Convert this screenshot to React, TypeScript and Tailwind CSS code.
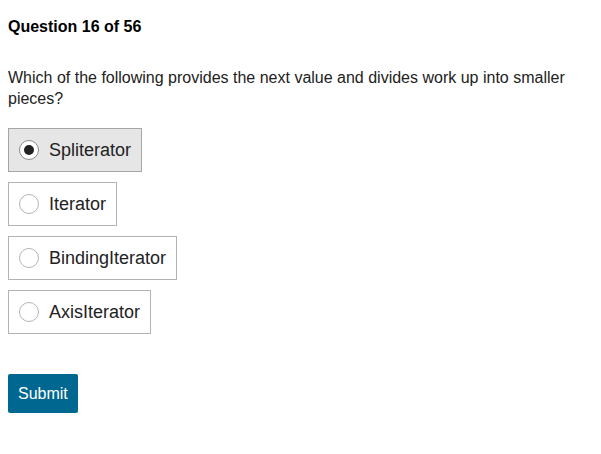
import React, { useState } from "react";

const options = ["Spliterator", "Iterator", "BindingIterator", "AxisIterator"];

function Radio({ checked }: { checked: boolean }) {
  return (
    <svg width="20" height="20" viewBox="0 0 20 20" className="shrink-0">
      <circle cx="10" cy="10" r="9.5" fill="#ffffff" stroke={checked ? "#8a8a8a" : "#b5b5b5"} strokeWidth="1" />
      {checked && <circle cx="10" cy="10" r="5" fill="#222222" />}
    </svg>
  );
}

export default function App() {
  const [sel, setSel] = useState(0);
  return (
    <div className="min-h-[454px] bg-white px-2 pt-[18px] text-black" style={{ fontFamily: '"Liberation Sans", Arial, sans-serif' }}>
      <h1 className="text-[16px] font-bold leading-[18px]">Question 16 of 56</h1>
      <p className="mt-[31px] text-[16px] leading-[21px] text-[#222]">
        Which of the following provides the next value and divides work up into smaller pieces?
      </p>
      <div className="mt-[19px] flex flex-col items-start gap-[10px]">
        {options.map((o, i) => (
          <button
            key={o}
            onClick={() => setSel(i)}
            className={`flex h-[44px] items-center gap-[10px] border pl-[10px] pr-[10px] text-[18px] text-[#222] ${
              sel === i ? "border-[#a6a6a6] bg-[#e6e6e6]" : "border-[#b3b3b3] bg-white"
            }`}
          >
            <Radio checked={sel === i} />
            <span>{o}</span>
          </button>
        ))}
      </div>
      <button className="mt-[40px] h-[39px] rounded-[2px] bg-[#006890] px-[10px] text-[16px] text-white">
        Submit
      </button>
    </div>
  );
}
